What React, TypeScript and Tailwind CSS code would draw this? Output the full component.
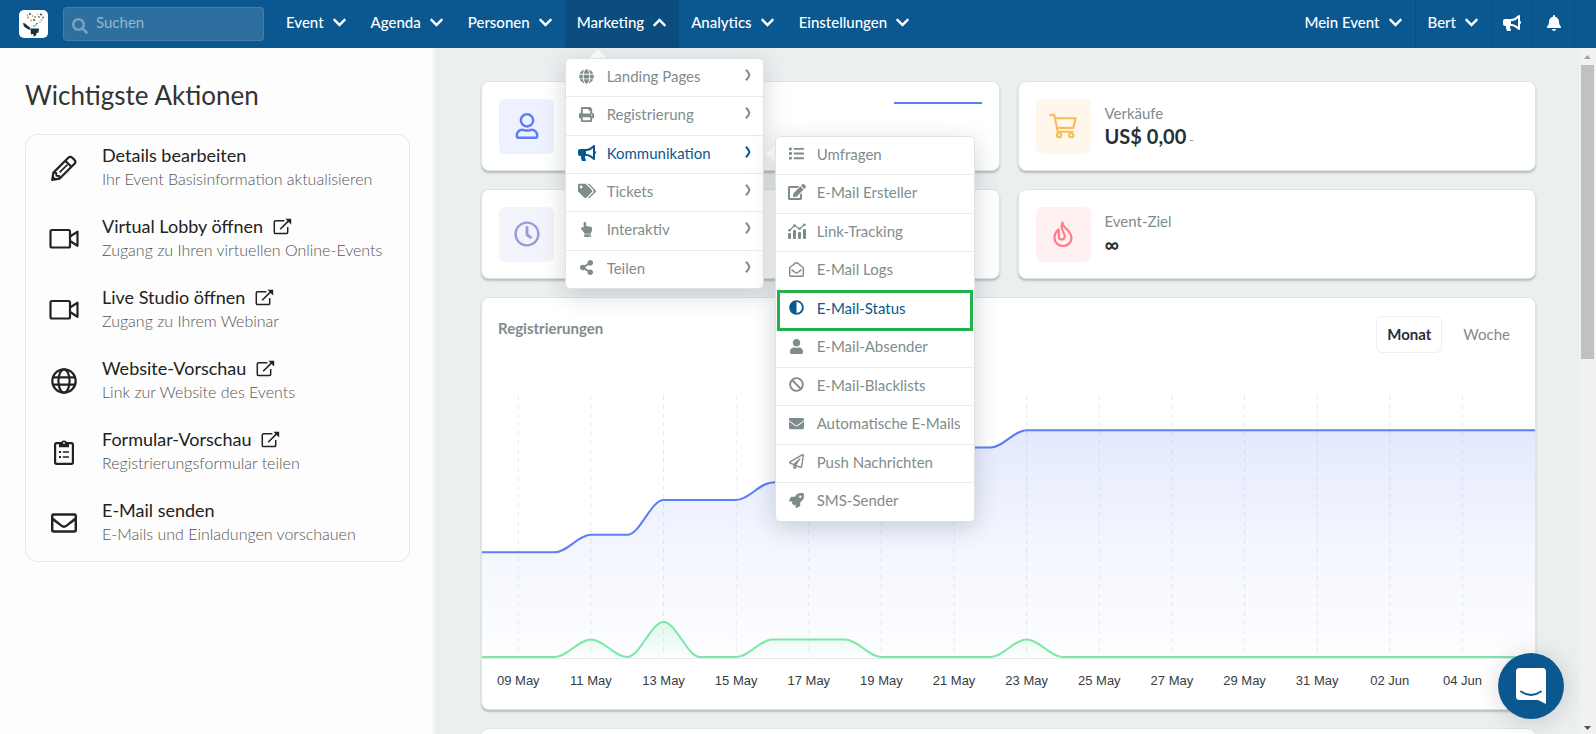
import React, { useState } from 'react';
import {
    FaAdjust, FaBan, FaBell, FaBullhorn, FaChevronDown, FaChevronUp, FaEdit, FaEnvelope, FaGlobe, FaHandPointUp,
    FaList, FaPrint, FaRegClock, FaRegEnvelope, FaRegEnvelopeOpen, FaRegPaperPlane, FaRegUser, FaRocket, FaSearch,
    FaShareAlt, FaTags, FaUser
} from 'react-icons/fa';

type IconProps = { className?: string };

const navItems = ['Event', 'Agenda', 'Personen', 'Marketing', 'Analytics', 'Einstellungen'];

const actions = [
    { icon: PencilIcon, title: 'Details bearbeiten', text: 'Ihr Event Basisinformation aktualisieren', external: false },
    { icon: VideoIcon, title: 'Virtual Lobby öffnen', text: 'Zugang zu Ihren virtuellen Online-Events', external: true },
    { icon: VideoIcon, title: 'Live Studio öffnen', text: 'Zugang zu Ihrem Webinar', external: true },
    { icon: GlobeIcon, title: 'Website-Vorschau', text: 'Link zur Website des Events', external: true },
    { icon: ClipboardIcon, title: 'Formular-Vorschau', text: 'Registrierungsformular teilen', external: true },
    { icon: FaRegEnvelope, title: 'E-Mail senden', text: 'E-Mails und Einladungen vorschauen', external: false },
];

const marketingMenu = [
    { icon: FaGlobe, label: 'Landing Pages' },
    { icon: FaPrint, label: 'Registrierung' },
    { icon: FaBullhorn, label: 'Kommunikation' },
    { icon: FaTags, label: 'Tickets' },
    { icon: FaHandPointUp, label: 'Interaktiv' },
    { icon: FaShareAlt, label: 'Teilen' },
];

const communicationMenu = [
    { icon: FaList, label: 'Umfragen' },
    { icon: FaEdit, label: 'E-Mail Ersteller' },
    { icon: TrackingIcon, label: 'Link-Tracking' },
    { icon: FaRegEnvelopeOpen, label: 'E-Mail Logs' },
    { icon: FaAdjust, label: 'E-Mail-Status' },
    { icon: FaUser, label: 'E-Mail-Absender' },
    { icon: FaBan, label: 'E-Mail-Blacklists' },
    { icon: FaEnvelope, label: 'Automatische E-Mails' },
    { icon: FaRegPaperPlane, label: 'Push Nachrichten' },
    { icon: FaRocket, label: 'SMS-Sender' },
];

const wideIcons: React.ElementType[] = [FaTags, FaBullhorn, FaEdit, TrackingIcon];

const days = ['09 May', '11 May', '13 May', '15 May', '17 May', '19 May', '21 May', '23 May', '25 May', '27 May', '29 May', '31 May', '02 Jun', '04 Jun'];

// one value per day, starting on 08 May
const daily = [0, 0, 0, 1, 0, 2, 0, 0, 1, 1, 1, 0, 0, 0, 0, 1, 0, 0, 0, 0, 0, 0, 0, 0, 0, 0, 0, 0, 0, 0];
const total = daily.map((_, i) => 6 + daily.slice(0, i + 1).reduce((a, b) => a + b, 0));

const STEP = 36;
const BASE = 262;
const CHART_W = STEP * (daily.length - 1);

function curve(values: number[]) {
    const y = (v: number) => BASE - v * 17.45;
    return values.reduce((d, v, i) => {
        if (i === 0) return `M0 ${y(v)}`;
        const x = i * STEP;
        return `${d} C${x - STEP * 0.65} ${y(values[i - 1])} ${x - STEP * 0.35} ${y(v)} ${x} ${y(v)}`;
    }, '');
}

function PencilIcon({ className }: IconProps) {
    return (
        <svg viewBox="0 0 26 26" className={className} fill="none" stroke="currentColor" strokeWidth="2.2" strokeLinejoin="round">
            <path d="M1.200 24.800 2.400 17.600 17.300 2.700Q19.300 .9 21.300 2.700L23.500 4.900Q25.300 6.900 23.500 8.800L8.500 23.700Z" />
            <path d="M14.300 5.700 20.400 11.800" />
            <path d="M8.600 17.400 16.400 9.600" strokeWidth="1.600" />
            <path d="M2.800 17.800H5.300V20.800H8.300V23.400" strokeWidth="1.800" />
            <path d="M1 25 1.700 20.500 5.500 24.300Z" fill="currentColor" stroke="none" />
        </svg>
    );
}

function VideoIcon({ className }: IconProps) {
    return (
        <svg viewBox="0 0 30 26" className={className} fill="none" stroke="currentColor" strokeWidth="2.2" strokeLinejoin="round">
            <rect x="1.500" y="4" width="19.500" height="17.500" rx="1.500" />
            <path d="M21 10.500 28.500 5.700V19.800L21 15" />
        </svg>
    );
}

function GlobeIcon({ className }: IconProps) {
    return (
        <svg viewBox="0 0 26 26" className={className} fill="none" stroke="currentColor" strokeWidth="2.2">
            <circle cx="13" cy="13" r="11.700" />
            <ellipse cx="13" cy="13" rx="5.600" ry="11.700" />
            <path d="M2 9.300H24M2 16.700H24" />
        </svg>
    );
}

function ClipboardIcon({ className }: IconProps) {
    return (
        <svg viewBox="0 0 26 26" className={className} fill="none" stroke="currentColor" strokeWidth="2.2">
            <rect x="4.100" y="4.100" width="17.800" height="20.700" rx="1.500" />
            <path d="M8 8.200V4.500H10a3 3 0 0 1 6 0H18V8.200Z" fill="currentColor" stroke="none" />
            <circle cx="13" cy="4" r="0.900" fill="#fdfdfd" stroke="none" />
            <path d="M11.800 13H18M11.800 18H18" strokeWidth="1.400" />
            <path d="M8 13H10M8 18H10" strokeWidth="2" />
        </svg>
    );
}

function ExternalIcon({ className }: IconProps) {
    return (
        <svg viewBox="0 0 20 18" className={className} fill="none" stroke="currentColor" strokeWidth="1.600">
            <path d="M12 2.800H2.800Q1.300 2.800 1.300 4.300V15Q1.300 16.500 2.800 16.500H14Q15.500 16.500 15.500 15V9.500" />
            <path d="M7.500 12 17 2.500" />
            <path d="M13 .8H19.200V7Z" fill="currentColor" stroke="none" />
        </svg>
    );
}

function CartIcon({ className }: IconProps) {
    return (
        <svg viewBox="0 0 29 26" className={className} fill="none" stroke="currentColor" strokeWidth="2.2" strokeLinejoin="round">
            <path d="M.5 1.500H5.500L9 19H25" />
            <path d="M6.200 5H27.500L25.200 15H8.200" />
            <circle cx="10.500" cy="22.500" r="2.200" />
            <circle cx="23" cy="22.500" r="2.200" />
        </svg>
    );
}

function FlameIcon({ className }: IconProps) {
    return (
        <svg viewBox="0 0 20 26" className={className} fill="none" stroke="currentColor" strokeWidth="2.200" strokeLinejoin="round">
            <path d="M9.500 1.500C9.500 7 18.500 9.500 18.500 17a8.500 8 0 0 1-17 0C1.500 13.500 2.800 10.500 5.800 8.500V15.500a3 3 0 0 0 6 0C11.800 11.500 6.500 8.500 9.500 1.500z" />
        </svg>
    );
}

function TrackingIcon({ className }: IconProps) {
    return (
        <svg viewBox="0 0 18 16" className={className} fill="currentColor">
            <rect x="0" y="10" width="3" height="6" rx="1" />
            <rect x="5" y="7" width="3" height="9" rx="1" />
            <rect x="10" y="9" width="3" height="7" rx="1" />
            <rect x="15" y="6" width="3" height="10" rx="1" />
            <path d="M1.5 7.5 6.5 2.5 11.5 6 16.5 1.5" fill="none" stroke="currentColor" strokeWidth="1.3" />
            <circle cx="1.5" cy="7.2" r="1.3" />
            <circle cx="6.5" cy="2.5" r="1.3" />
            <circle cx="11.5" cy="5.8" r="1.3" />
            <circle cx="16.5" cy="1.7" r="1.3" />
        </svg>
    );
}

function Logo() {
    return (
        <svg viewBox="0 0 29 28" className="w-[29px] h-7 shrink-0">
            <rect width="29" height="28" rx="5" fill="#fff" />
            <path d="M4 13 6 13.500 9 16 11 17.500 11.500 20 8.500 19 5 16.500Z" fill="#15323f" />
            <path d="M11.500 18.500H20L19.500 22.500 17.500 23 17 25.500 14.500 26.500 14.500 24 12 24.500Z" fill="#15323f" />
            <g fill="#15323f">
                <circle cx="11" cy="4" r="0.900" />
                <circle cx="16" cy="7" r="0.700" />
                <circle cx="18" cy="13.500" r="0.700" />
                <circle cx="22" cy="4.500" r="0.900" />
                <circle cx="15" cy="16" r="0.700" />
            </g>
            <g fill="#e2574c">
                <circle cx="13.500" cy="6" r="0.700" />
                <circle cx="20" cy="7" r="1" />
                <circle cx="9" cy="7.500" r="0.900" />
                <circle cx="21" cy="12" r="0.700" />
            </g>
            <g fill="#2fa386">
                <circle cx="24" cy="7.500" r="1" />
                <circle cx="15" cy="10" r="1.200" />
                <circle cx="8.500" cy="5" r="0.700" />
                <circle cx="17" cy="15" r="0.800" />
            </g>
            <g fill="#e9a23b">
                <circle cx="12" cy="10.500" r="0.900" />
                <circle cx="22.500" cy="10" r="0.900" />
                <circle cx="19" cy="4" r="0.800" />
            </g>
        </svg>
    );
}

function MenuRow({ icon: Icon, label, active, arrow, children }: {
    icon: React.ElementType; label: string; active?: boolean; arrow?: boolean; children?: React.ReactNode;
}) {
    return (
        <li className="relative flex-1 flex border-b border-[#e8eaeb] last:border-b-0">
            <a href="#" className={`flex-1 flex items-center pl-[13px] pr-3 pb-[3px] whitespace-nowrap text-[15px] ${active ? 'text-[#0b5890]' : 'text-[#7f8c8d]'}`}>
                <span className="w-4 mr-3 flex justify-center shrink-0">
                    <Icon className={wideIcons.includes(Icon) ? 'w-[18px] h-4 shrink-0' : 'w-[15px] h-[15px] shrink-0'} />
                </span>
                {label}
                {arrow && (
                    <svg viewBox="0 0 6 12" className="w-[6px] h-3 ml-auto mb-[2px]" fill="none" stroke="currentColor" strokeWidth="2">
                        <path d="M1 0.8Q4 4 4.400 6Q4 8 1 11.200" />
                    </svg>
                )}
            </a>
            {children}
        </li>
    );
}

function StatCard({ icon: Icon, tile, label, value, suffix, children }: {
    icon: React.ElementType; tile: string; label?: string; value?: string; suffix?: string; children?: React.ReactNode;
}) {
    return (
        <section className="flex items-center h-[90px] px-[17px] bg-white rounded-lg border border-[#dfe4e4] shadow-[0_2px_2px_#b9c0c1]">
            <div className={`size-[55px] rounded-md flex items-center justify-center shrink-0 ${tile}`}>
                <Icon className="h-[26px] w-7" />
            </div>
            {label && (
                <div className="ml-[14px] pb-[3px]">
                    <div className="text-[15px] leading-[22px] text-[#7f8c8d]">{label}</div>
                    <div className="text-[20px] leading-6 font-bold text-[#263038]">
                        {value}{suffix && <span className="text-xs font-normal text-[#7f8c8d]"> {suffix}</span>}
                    </div>
                </div>
            )}
            {children}
        </section>
    );
}

export default function App() {
    const [search, setSearch] = useState('');
    const [range, setRange] = useState('Monat');

    return (
        <div className="h-screen flex flex-col overflow-hidden bg-[#ebeff0] font-['Lato',sans-serif]">
            {/* Top bar */}
            <header className="relative z-20 h-12 shrink-0 flex items-center bg-[#0b5890] text-white text-[15px] font-medium">
                <a href="#" aria-label="Home" className="ml-[19px]"><Logo /></a>
                <label className="ml-[15px] mr-[10px] w-[201px] h-[34px] flex items-center gap-2 px-2 rounded bg-white/14 border border-white/10">
                    <FaSearch className="size-4 mt-1 text-white/35 shrink-0" />
                    <input
                        placeholder="Suchen"
                        aria-label="Suchen"
                        value={search}
                        onChange={(e) => setSearch(e.target.value)}
                        className="w-full pb-[3px] bg-transparent font-normal text-[15px] placeholder:text-white/50 focus:outline-none"
                    />
                </label>
                <nav className="flex self-stretch">
                    {navItems.map((item) => (
                        <div key={item} className={`relative flex ${item === 'Marketing' ? 'bg-[#0b4d7e]' : ''}`}>
                            <button className="flex items-center gap-2 px-3 pb-[3px]">
                                {item}
                                {item === 'Marketing' ? <FaChevronUp className="size-[15px]" /> : <FaChevronDown className="size-[15px]" />}
                            </button>
                            {item === 'Marketing' && <MarketingDropdown />}
                        </div>
                    ))}
                </nav>
                <div className="ml-auto mr-[21px] flex self-stretch">
                    <button className="flex items-center gap-2 px-3 pb-[3px] border-r border-[#0b4d7e]">Mein Event <FaChevronDown className="size-[15px]" /></button>
                    <button className="flex items-center gap-2 px-3 pb-[3px] border-r border-[#0b4d7e]">Bert <FaChevronDown className="size-[15px]" /></button>
                    <button aria-label="Neuigkeiten" className="w-[41px] flex items-center justify-center pb-[3px] border-r border-[#0b4d7e]"><FaBullhorn className="w-[18px] h-4" /></button>
                    <button aria-label="Benachrichtigungen" className="w-[42px] flex items-center justify-center pb-[3px] border-r border-[#0b4d7e]"><FaBell className="size-4" /></button>
                </div>
            </header>

            <div className="flex-1 min-h-0 flex">
                {/* Quick actions */}
                <aside className="w-[436px] shrink-0 px-[25px] pt-[30px] bg-[#fdfdfd] shadow-[inset_-5px_0_5px_-4px_#e3e6e7]">
                    <h1 className="text-[26px] leading-[34px] text-[#333]">Wichtigste Aktionen</h1>
                    <ul className="mt-[22px] w-[385px] border border-[#e6e7e8] rounded-xl">
                        {actions.map(({ icon: Icon, title, text, external }) => (
                            <li key={title}>
                                <a href="#" className="flex h-[71px] pl-[23px] pt-2">
                                    <Icon className="w-[30px] h-[26px] mt-3 text-[#222] shrink-0" />
                                    <span className="ml-[23px]">
                                        <span className="flex items-center gap-[10px] h-6 text-[18px] leading-6 text-[#222]">
                                            {title}
                                            {external && <ExternalIcon className="w-[19px] h-[17px] mt-px" />}
                                        </span>
                                        <span className="block text-[16px] leading-6 font-light text-[#555]">{text}</span>
                                    </span>
                                </a>
                            </li>
                        ))}
                    </ul>
                </aside>

                {/* Dashboard */}
                <main className="flex-1 min-w-0 overflow-hidden pl-[45px] pr-[43px] pt-[33px]">
                    <div className="grid grid-cols-2 gap-[18px]">
                        <StatCard icon={FaRegUser} tile="bg-[#eef1ff] text-[#5b7ff5]">
                            <svg viewBox="0 0 88 2" className="ml-auto w-[88px] h-[2px] self-start mt-5" preserveAspectRatio="none">
                                <path d="M0 1H88" stroke="#5b7ff5" strokeWidth="2" />
                            </svg>
                        </StatCard>
                        <StatCard icon={CartIcon} tile="bg-[#fff7ec] text-[#f7bd5b]" label="Verkäufe" value="US$ 0,00" suffix="-" />
                        <StatCard icon={FaRegClock} tile="bg-[#f3f4fb] text-[#9a9ad8]" />
                        <StatCard icon={FlameIcon} tile="bg-[#fff1f2] text-[#ff7b86]" label="Event-Ziel" value="∞" />
                    </div>

                    <section className="mt-[18px] pb-[18px] bg-white rounded-lg border border-[#dfe4e4] shadow-[0_2px_2px_#b9c0c1]">
                        <div className="flex justify-between items-start pl-4 pr-3 pt-[18px]">
                            <h2 className="text-[15px] leading-6 font-bold text-[#7f8c8d]">Registrierungen</h2>
                            <div className="flex gap-2 text-[15px]">
                                {['Monat', 'Woche'].map((item) => (
                                    <button
                                        key={item}
                                        onClick={() => setRange(item)}
                                        className={`h-[37px] border rounded-md ${range === item ? 'px-[10px] border-[#eceeef] font-bold text-[#263038]' : 'border-transparent px-3 text-[#7f8c8d]'}`}
                                    >
                                        {item}
                                    </button>
                                ))}
                            </div>
                        </div>
                        <svg viewBox={`0 0 ${CHART_W} 264`} preserveAspectRatio="none" className="block mt-[42px] w-full h-[264px]" fill="none">
                            <defs>
                                <linearGradient id="blueFill" x1="0" y1="0" x2="0" y2="1">
                                    <stop offset="0" stopColor="#5b7ff5" stopOpacity="0.17" />
                                    <stop offset="0.5" stopColor="#5b7ff5" stopOpacity="0.07" />
                                    <stop offset="1" stopColor="#5b7ff5" stopOpacity="0.01" />
                                </linearGradient>
                                <linearGradient id="greenFill" x1="0" y1="0" x2="0" y2="1">
                                    <stop offset="0" stopColor="#7ae8a8" stopOpacity="0.2" />
                                    <stop offset="1" stopColor="#7ae8a8" stopOpacity="0.02" />
                                </linearGradient>
                            </defs>
                            {days.map((day, i) => (
                                <path key={day} d={`M${STEP * (2 * i + 1)} 0V${BASE}`} stroke="#e9ebee" strokeDasharray="5 4" vectorEffect="non-scaling-stroke" />
                            ))}
                            <path d={`M0 263.5H${CHART_W}`} stroke="#e8e8e8" />
                            <path d={`${curve(total)}V${BASE}H0Z`} fill="url(#blueFill)" />
                            <path d={`${curve(daily)}V${BASE}H0Z`} fill="url(#greenFill)" />
                            <path d={curve(total)} stroke="#5b7ff5" strokeWidth="2" vectorEffect="non-scaling-stroke" />
                            <path d={curve(daily)} stroke="#7ae8a8" strokeWidth="2" vectorEffect="non-scaling-stroke" />
                        </svg>
                        {/* every label covers two days, the last day stays empty */}
                        <div className="flex mt-3 text-[13px] leading-5 text-[#373d3f] font-['Liberation_Sans',sans-serif]">
                            {days.map((day) => <span key={day} className="flex-[2] text-center whitespace-nowrap">{day}</span>)}
                            <span className="flex-1" />
                        </div>
                    </section>

                    <section className="mt-[18px] h-40 bg-white rounded-lg border border-[#dfe4e4]" />
                </main>

                {/* Scrollbar */}
                <div aria-hidden="true" className="w-[17px] shrink-0 flex flex-col items-center bg-[#f1f1f1]">
                    <svg viewBox="0 0 17 17" className="size-[17px]"><path d="M5 11h7L8.500 7z" fill="#a3a3a3" /></svg>
                    <div className="w-[13px] h-3/7 bg-[#c1c1c1]" />
                    <svg viewBox="0 0 17 17" className="size-[17px] mt-auto shrink-0"><path d="M5 9h7l-3.500 4z" fill="#505050" /></svg>
                </div>
            </div>

            {/* Chat launcher */}
            <button aria-label="Chat" className="fixed right-8 bottom-[15px] size-[66px] z-30 rounded-full bg-[#0b5890] shadow-[0_2px_24px_rgba(0,0,0,0.16)] flex items-center justify-center">
                <svg viewBox="0 0 30 36" className="w-[30px] h-9">
                    <path d="M3.500 0h23A3.500 3.500 0 0 1 30 3.500V36l-8-4H3.500A3.500 3.500 0 0 1 0 28.500v-25A3.500 3.500 0 0 1 3.500 0z" fill="#fff" />
                    <path d="M5 23.500q10 7 20 0" fill="none" stroke="#0b5890" strokeWidth="1.800" strokeLinecap="round" />
                </svg>
            </button>
        </div>
    );
}

function MarketingDropdown() {
    return (
        <div className="absolute left-0 top-[58px] w-[199px] font-normal">
            <div className="absolute left-[27px] -top-[6px] size-3 rotate-45 bg-white" />
            <ul className="relative flex flex-col h-[231px] bg-white rounded-[5px] border border-[#dfe3e3] shadow-[0_6px_24px_rgba(34,50,60,0.2)]">
                {marketingMenu.map((entry) => (
                    <MenuRow key={entry.label} {...entry} arrow active={entry.label === 'Kommunikation'}>
                        {entry.label === 'Kommunikation' && (
                            <div className="absolute left-[209px] top-0 w-[200px]">
                                <div className="absolute -left-[6px] top-3 size-3 rotate-45 bg-white" />
                                <ul className="relative flex flex-col h-[386px] bg-white rounded-[5px] border border-[#dfe3e3] shadow-[0_6px_24px_rgba(34,50,60,0.2)]">
                                    {communicationMenu.map((sub) => (
                                        <MenuRow key={sub.label} {...sub} active={sub.label === 'E-Mail-Status'}>
                                            {sub.label === 'E-Mail-Status' && (
                                                <span className="absolute inset-x-px -top-px -bottom-[3px] z-10 border-3 border-[#22b14c]" />
                                            )}
                                        </MenuRow>
                                    ))}
                                </ul>
                            </div>
                        )}
                    </MenuRow>
                ))}
            </ul>
        </div>
    );
}
